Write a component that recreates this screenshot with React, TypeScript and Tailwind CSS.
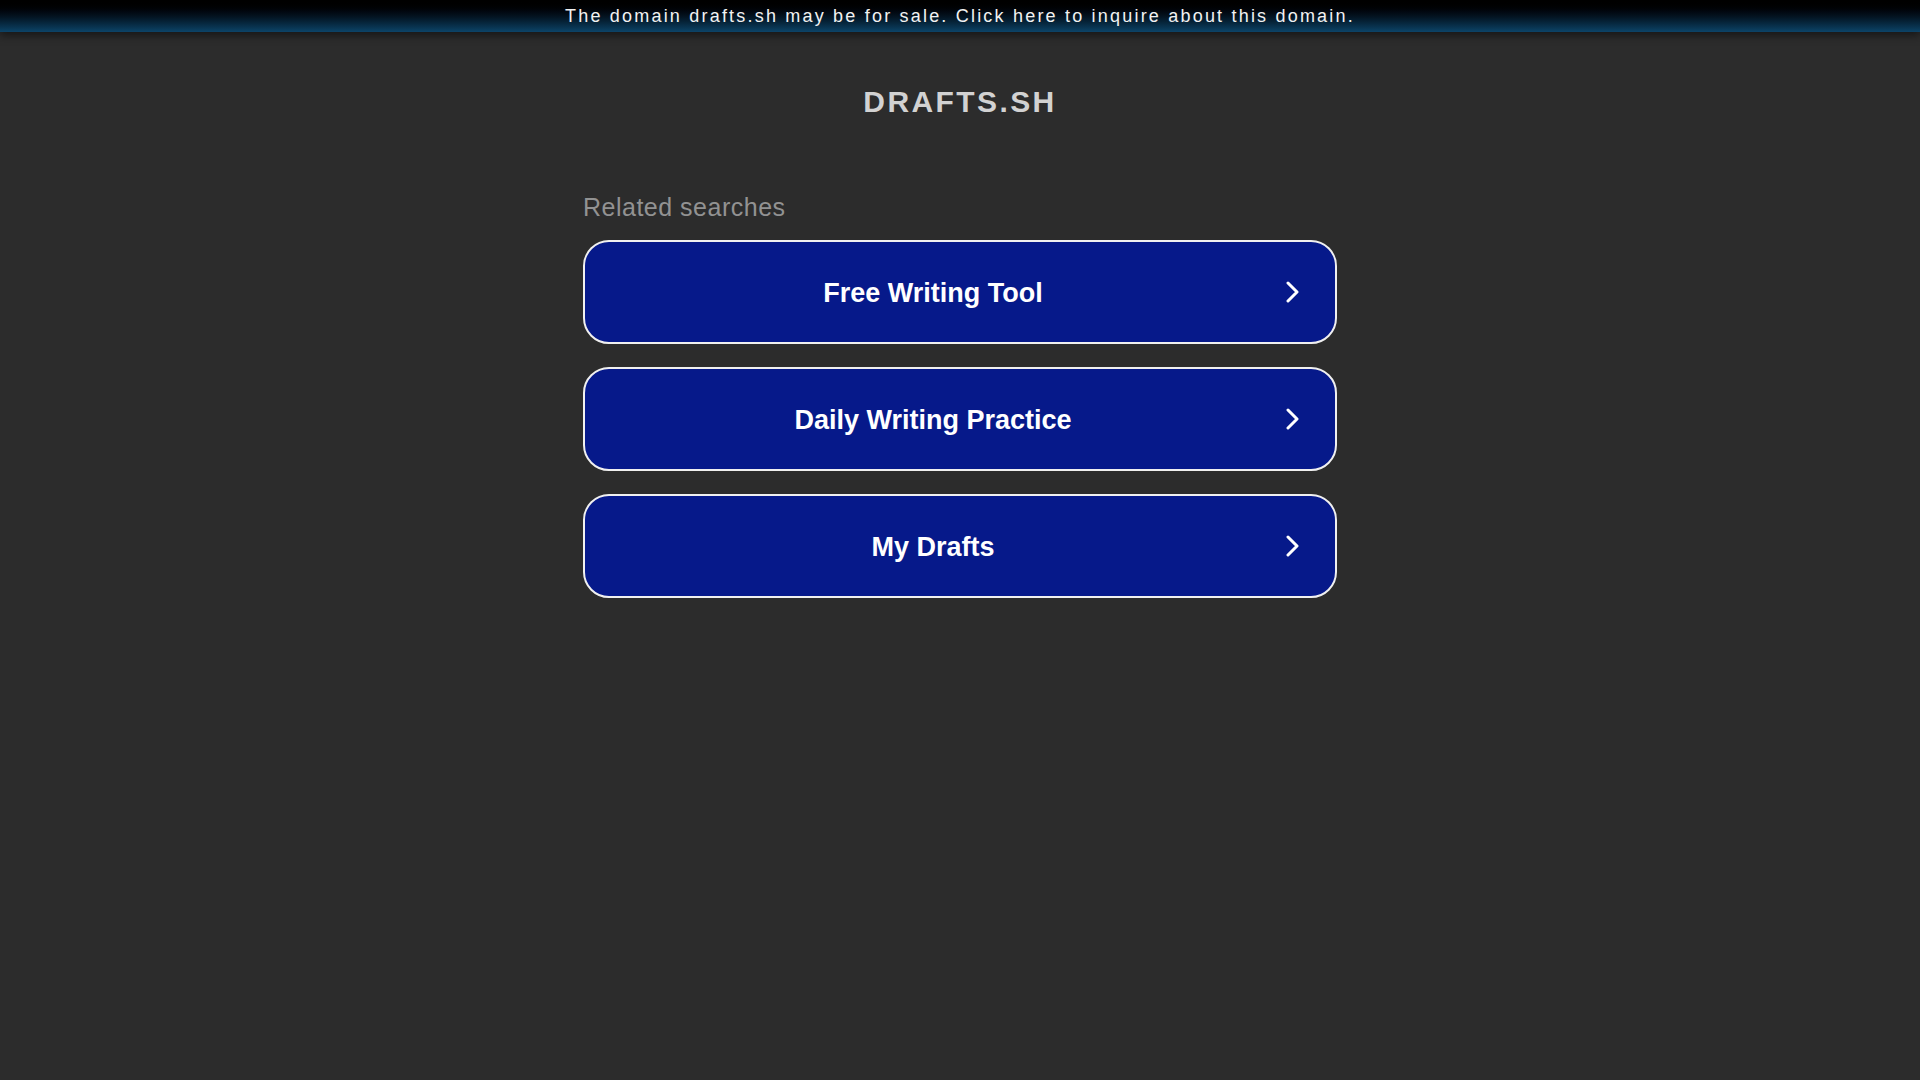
const searches = ["Free Writing Tool", "Daily Writing Practice", "My Drafts"];

function Chevron() {
  return (
    <svg width="13" height="22" viewBox="0 0 13 22" fill="none" className="shrink-0">
      <polyline
        points="2,2 11,11 2,20"
        stroke="white"
        strokeWidth="3"
        strokeLinecap="round"
        strokeLinejoin="round"
      />
    </svg>
  );
}

export default function App() {
  return (
    <div className="min-h-screen bg-[#2c2c2c] font-['Liberation_Sans',Arial,sans-serif]">
      <div className="relative z-10 flex h-8 items-center justify-center bg-gradient-to-b from-[#000000] via-[#03121f] to-[#0c4468] shadow-[0_3px_10px_rgba(0,0,0,0.55)]">
        <a href="#" className="pb-[1px] text-[18px] leading-none tracking-[2.2px] text-[#f2f2f2]">
          The domain drafts.sh may be for sale. Click here to inquire about this domain.
        </a>
      </div>

      <h1 className="mt-[53px] text-center text-[30px] leading-[34px] font-bold tracking-[2.4px] text-[#d2d2d2]">
        DRAFTS.SH
      </h1>

      <div className="mx-auto mt-[74px] w-[754px]">
        <p className="text-[25px] leading-[29px] tracking-[0.5px] text-[#929292]">Related searches</p>

        <div className="mt-[18px] flex flex-col gap-[23px]">
          {searches.map((label) => (
            <a
              key={label}
              href="#"
              className="flex h-[104px] items-center rounded-[26px] border-2 border-[#f0f0f0] bg-[#06198a] pr-[36px]"
            >
              <span className="mr-[5px] flex-1 pt-[2px] text-center text-[27px] font-bold text-white">{label}</span>
              <Chevron />
            </a>
          ))}
        </div>
      </div>
    </div>
  );
}
